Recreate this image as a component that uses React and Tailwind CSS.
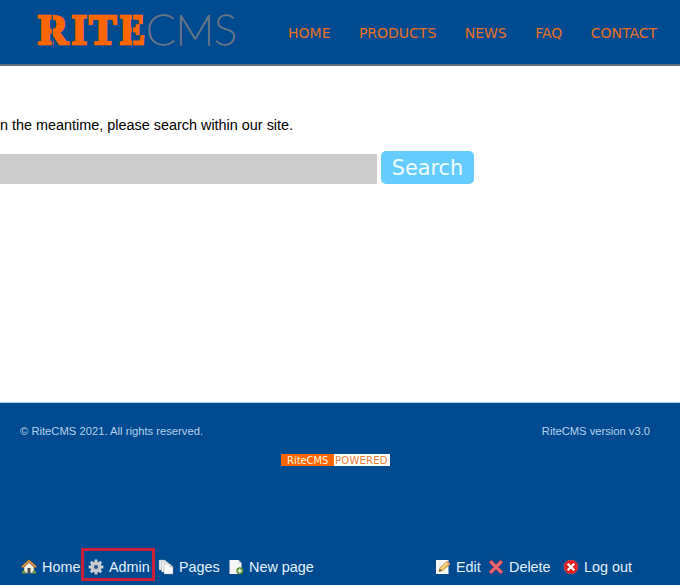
const nav = ["HOME", "PRODUCTS", "NEWS", "FAQ", "CONTACT"];

function Logo() {
  return (
    <svg className="ml-[32px] block shrink-0" width="210" height="60" viewBox="32 0 210 60" aria-label="RiteCMS">
      <g fill="#ff6600" stroke="#ff6600" strokeWidth="2.500" fontFamily="'Liberation Serif', serif" fontWeight="700" fontSize="42.500">
        <text x="38" y="44.200" textLength="30" lengthAdjust="spacingAndGlyphs">R</text>
        <text x="71.500" y="44.200" textLength="15.500" lengthAdjust="spacingAndGlyphs">I</text>
        <text x="89" y="44.200" textLength="27.500" lengthAdjust="spacingAndGlyphs">T</text>
        <text x="120" y="44.200" textLength="25" lengthAdjust="spacingAndGlyphs">E</text>
      </g>
      <path d="M52.300 13v34M132.600 13v34" stroke="#004a8f" strokeWidth="1" />
      <text x="146" y="45" fill="#687887" stroke="#687887" strokeWidth="1.300" fontFamily="Lato, sans-serif" fontWeight="100" fontSize="42" textLength="91" lengthAdjust="spacingAndGlyphs">CMS</text>
    </svg>
  );
}

function HomeIcon() {
  return (
    <svg width="16" height="16" viewBox="0 0 16 16">
      <path d="M3 7.500 8 3l5 4.500V14H3z" fill="#f3eedf" stroke="#8c7c64" strokeWidth=".6" />
      <path d="M1 8.200 8 2l7 6.200" fill="none" stroke="#8d5c28" strokeWidth="2.800" />
      <path d="M1 8.200 8 2l7 6.200" fill="none" stroke="#d79a50" strokeWidth="1.600" />
      <path d="M6.500 9h3v5h-3z" fill="#4a4a50" />
      <path d="M1 12h3.500v2.500H1zM11.500 12H15v2.500h-3.500z" fill="#6f9a3c" />
    </svg>
  );
}

function GearIcon() {
  return (
    <svg width="16" height="16" viewBox="0 0 16 16">
      <g stroke="#cfcfcf" strokeWidth="3">
        <path d="M8 .6v14.800M.6 8h14.800M2.800 2.800l10.400 10.400M13.200 2.800 2.800 13.200" />
      </g>
      <circle cx="8" cy="8" r="5.300" fill="#d6d6d6" />
      <circle cx="8" cy="8" r="3.300" fill="none" stroke="#b4b7ba" strokeWidth="1" />
      <circle cx="8" cy="8" r="2.100" fill="#24588f" />
    </svg>
  );
}

function PagesIcon() {
  return (
    <svg width="16" height="16" viewBox="0 0 16 16" stroke="#8b98a5" strokeWidth=".5">
      <path d="M1 1h6l2 2v8H1z" fill="#f0f0f0" />
      <path d="M3.500 3h6l2 2v8h-8z" fill="#f6f6f6" />
      <path d="M6 5h6l3 3v7H6z" fill="#fff" />
      <path d="M12 5v3h3" fill="#d5d5d5" />
    </svg>
  );
}

function NewPageIcon() {
  return (
    <svg width="16" height="16" viewBox="0 0 16 16">
      <path d="M1.500 1h9L13.500 4v11h-12z" fill="#f5f5f3" />
      <path d="M10.500 1v3h3" fill="#d0d3d6" />
      <circle cx="11.800" cy="11.800" r="3.500" fill="#5d9139" />
      <path d="M11.800 9.800v4M9.800 11.800h4" stroke="#fff" strokeWidth="1.300" />
    </svg>
  );
}

function EditIcon() {
  return (
    <svg width="16" height="16" viewBox="0 0 16 16">
      <path d="M1 1h12.500v14H1z" fill="#f9f9f7" />
      <path d="M3 3.500h7M3 5.500h5M3 7.500h4" stroke="#d8dbdd" strokeWidth=".6" />
      <path d="m4 12.500 1-3.700 7.300-6.500 2.800 2.800-7.300 6.500z" fill="#e9b84e" stroke="#a87c38" strokeWidth=".6" />
      <path d="m6 9.800 7.200-6.500" stroke="#ffe499" strokeWidth="1.300" />
      <path d="m4 12.500.8-2.800 2 2z" fill="#57493a" />
      <path d="m11.500 3 2.800 2.800 1-1-2.800-2.800z" fill="#e18c86" />
    </svg>
  );
}

function DeleteIcon() {
  return (
    <svg width="16" height="16" viewBox="0 0 16 16">
      <path d="m2 2 12 12M14 2 2 14" stroke="#c94352" strokeWidth="3.800" />
      <path d="m2.500 2.500 11 11M13.500 2.500l-11 11" stroke="#ee6a70" strokeWidth="2.400" />
    </svg>
  );
}

function LogoutIcon() {
  return (
    <svg width="16" height="16" viewBox="0 0 16 16">
      <path d="M5 1.400h6L14.600 5v6L11 14.600H5L1.400 11V5z" fill="#e51c20" stroke="#ee5557" strokeWidth=".6" />
      <path d="m4.700 4.700 6.600 6.600m0-6.600-6.600 6.600" stroke="#fff" strokeWidth="2.300" />
    </svg>
  );
}

function Action({ icon, label, className }) {
  return (
    <a className={"flex h-[18px] shrink-0 items-center gap-[5px] whitespace-nowrap " + className}>
      {icon}
      <span className="pt-px leading-[18px]">{label}</span>
    </a>
  );
}

export default function App() {
  return (
    <div className="flex h-[585px] w-[680px] flex-col overflow-hidden bg-white font-['Liberation_Sans',sans-serif]">
      <header className="flex h-[66px] shrink-0 border-b-2 border-[#5f6b76] bg-[#004a8f]">
        <Logo />
        <nav className="ml-[46px] flex h-[66px] items-center gap-[28.400px] font-['DejaVu_Sans',sans-serif] text-[14px] text-[#e8711f]">
          {nav.map((n) => <a key={n}>{n}</a>)}
        </nav>
      </header>
      <main className="h-[336px] shrink-0 pt-[49px]">
        <p className="h-[20px] whitespace-nowrap text-[14.420px] leading-[20px] text-black">n the meantime, please search within our site.</p>
        <div className="mt-[16px] flex items-end gap-[4px]">
          <div className="h-[30px] w-[377px] bg-[#ccc]" />
          <button className="h-[33px] w-[93px] rounded-[5px] bg-[#66ccff] pt-px font-['DejaVu_Sans',sans-serif] text-[20.800px] leading-[32px] text-[#f2fcff]">Search</button>
        </div>
      </main>
      <footer className="flex h-[183px] shrink-0 flex-col border-t border-[#a8cbe9] bg-[#004a8f]">
        <div className="mt-[20px] flex h-[16px] justify-between pr-[30px] pl-[20px] text-[11.200px] leading-[16px] text-[#b5d2eb]">
          <span className="tracking-[0.020px]">© RiteCMS 2021. All rights reserved.</span>
          <span>RiteCMS version v3.0</span>
        </div>
        <div className="mt-[15px] ml-[281px] flex h-[12px] w-[109px] font-['DejaVu_Sans',sans-serif] text-[10px] leading-[13px]">
          <span className="h-[12px] w-[53px] bg-[#ff6600] pl-[6px] tracking-[-0.050px] text-[#fff3df]">RiteCMS</span>
          <span className="h-[12px] w-[56px] bg-white pl-[1px] tracking-[0.250px] text-[#e77b35]">POWERED</span>
        </div>
        <div className="mt-[82px] flex h-[33px] shrink-0 items-center text-[14.400px] text-[#e3f3ff]">
          <Action className="mt-[4px] ml-[21px] w-[60px]" icon={<HomeIcon />} label="Home" />
          <div className="flex h-[33px] w-[74px] shrink-0 items-center border-[3px] border-[#cb2038]">
            <Action className="mt-[4px] ml-[4px]" icon={<GearIcon />} label="Admin" />
          </div>
          <Action className="mt-[4px] ml-[3px] w-[70px]" icon={<PagesIcon />} label="Pages" />
          <Action className="mt-[4px] w-[204px]" icon={<NewPageIcon />} label="New page" />
          <Action className="mt-[4px] ml-[3px] w-[53px]" icon={<EditIcon />} label="Edit" />
          <Action className="mt-[4px] w-[75px]" icon={<DeleteIcon />} label="Delete" />
          <Action className="mt-[4px]" icon={<LogoutIcon />} label="Log out" />
        </div>
      </footer>
    </div>
  );
}
